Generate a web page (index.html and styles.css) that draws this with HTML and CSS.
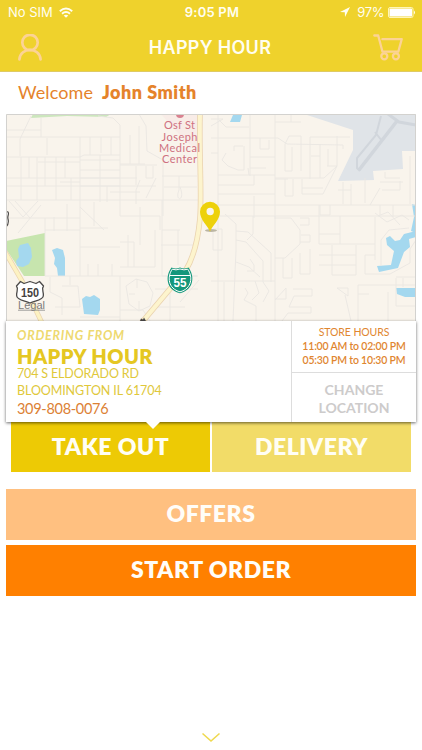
FILE: index.html
```html
<!DOCTYPE html>
<html lang="en">
<head>
  <meta charset="UTF-8" />
  <meta name="viewport" content="width=device-width, initial-scale=1.0"/>
  <title>Happy Hour</title>
  <link rel="stylesheet" href="styles.css">
</head>
<body>
  <header class="header">
    <div class="status">
      <div class="status-left">
        <span class="carrier">No SIM</span>
        <svg class="wifi" width="14" height="11" viewBox="0 0 14 11" fill="none" stroke="#fffef0" stroke-width="1.9">
          <path d="M0.8 4.2 Q7 -1.3 13.2 4.2"/>
          <path d="M3 6.8 Q7 3.3 11 6.8"/>
          <path d="M7 10.8 L4.7 8.6 Q7 6.8 9.3 8.6 Z" fill="#fffef0" stroke="none"/>
        </svg>
      </div>
      <span class="time">9:05 PM</span>
      <div class="status-right">
        <svg width="10" height="10" viewBox="0 0 10 10"><path d="M10 0 L0 5 L4.8 5.2 L5 10 Z" fill="#fffef0"/></svg>
        <span class="percent">97%</span>
        <svg width="28" height="11" viewBox="0 0 28 11">
          <rect x="0.5" y="0.5" width="24.5" height="10" rx="1.5" fill="none" stroke="#fff6b8"/>
          <rect x="1.5" y="1.5" width="22.5" height="8" rx="0.6" fill="#fff"/>
          <path d="M26 3.5 Q28 5.5 26 7.5 Z" fill="#fffef0"/>
        </svg>
      </div>
    </div>
    <div class="navbar">
      <svg class="user" width="26" height="28" viewBox="0 0 26 28" fill="none" stroke="#fcd395" stroke-width="2.7" stroke-linecap="round">
        <circle cx="13" cy="8.5" r="7.7"/>
        <path d="M2.4 25.3 C3.5 12.8 22.5 12.8 23.6 25.3"/>
      </svg>
      <h1 class="title">HAPPY HOUR</h1>
      <svg class="cart" width="30" height="27" viewBox="0 0 30 27" fill="none" stroke="#fcd395" stroke-width="2.3" stroke-linecap="round" stroke-linejoin="round">
        <path d="M1.3 1.5 H5.2 L9.5 17.7 H25.3 L28.7 5.2 H9.4"/>
        <circle cx="11.3" cy="22.3" r="3"/>
        <circle cx="22.9" cy="22.3" r="3"/>
      </svg>
    </div>
  </header>

  <div class="welcome"><span class="hello">Welcome</span><b class="name">John Smith</b></div>

  <main class="content">
    <svg class="map" width="410" height="207" viewBox="6 114 410 207">
      <rect x="6" y="114" width="410" height="207" fill="#f9f4ec"/>
      <!-- airport -->
      <path d="M304 114 H416 V151 H402 L403 169 L373 171 L374 180 L338 181 L353 150 V130 Z" fill="#e0e4e8"/>
      <g fill="none" stroke="#d1d6dc">
        <path d="M397 121 L359 170" stroke-width="3.5"/>
        <path d="M381 116 L376 135 L357 158 V168 L360 171 M375 132 L382 141" stroke-width="2"/>
        <path d="M388 114 L399 122 L416 125" stroke-width="3"/>
      </g>
      <!-- parks and water -->
      <path d="M33 114 H111 L106 117 L67 116 L31 118 Z" fill="#cce6bd"/>
      <path d="M6 241 L45 233 V276 H24 L6 249 Z" fill="#c7e5ae"/>
      <path d="M161 114 H198 V152 L178 133 Z" fill="#f8ece7"/>
      <g fill="#a4d8ef">
        <path d="M20 245 L28 243 L31 248 L32 257 L29 264 L23 267 L17 266 L16 261 L19 257 L18 249 Z"/>
        <path d="M52 250 L57 248 L63 250 L65 258 V276 H58 L57 268 L54 264 L55 258 Z"/>
        <path d="M82 299 L86 296 L90 297 L94 295 L100 299 V310 L98 315 L84 314 Z"/>
        <path d="M233 115 H242 L240 122 H230 Z"/>
        <path d="M386 238 L390 236 L395 241 L400 240 L404 234 L416 231 V237 L409 239 L410 247 L404 252 L398 268 L379 272 L377 266 L391 265 L394 251 L387 245 Z"/>
        <path d="M416 205 L412 204 L414 217 L411 231 L416 233 Z"/>
        <path d="M396 288 H416 V297 H405 L397 294 Z"/>
      </g>
      <!-- streets -->
      <g fill="none" stroke="#eae6e2" stroke-width="0.9">
        <path d="M31 116 L20 139 V156 M6 130 H41 M41 118 V137 M6 137 H120 M47 138 V155 M6 157 H80 L84 155 H120 M80 137 V276 M90 137 V155 M101 137 V153 M111 137 V155 M98 116 L113 118 L120 125 V216 M139 126 V164 M130 135 V164 M120 164 H145 M139 114 L146 126 L147 151 L163 160 V216"/>
        <path d="M6 178 H137 M6 186 H156 M6 200 H198 M21 157 V200 M29 157 V178 M37 157 V200 M45 157 V186 M56 157 V200 M65 157 V178 M71 178 V200 M38 162 H80 M60 182 H80 M80 160 H120 M80 170 H120 M80 178 H120 M80 186 H120 M100 155 V202 M107 186 V202 M110 192 H140 M120 165 H157 M136 166 V185 M146 166 V178 L153 178 V166 M156 178 L146 198 M140 180 L136 190 V204 M162 176 H197 M164 187 H197 M179 176 V190 M179 190 C174 202 186 202 180 187"/>
        <path d="M9 201 L23 217 L38 201 M15 201 L30 218 M6 218 H80 M18 233 L41 205 M45 218 V276 M45 230 H80 M54 217 V231 M67 204 V231 M80 247 H120 M80 228 H108 M80 207 L104 230 M94 202 V226 M120 216 H160 V230 M120 242 H134 V267 M128 235 V267 M120 267 H155 V230 M140 207 V245 M162 200 V276 L198 276 M162 230 H180 M178 230 V265 M161 245 H195 M45 276 H197 M88 264 V276 M98 264 V276 M112 264 V276"/>
        <path d="M50 277 V292 L62 298 V315 M62 286 H78 L80 307 H55 M70 276 V285 M120 276 V321 M120 310 H143 L150 321 M126 286 L136 279 L147 282 L153 293 L150 306 L139 311 L129 304 Z M137 279 V288 M129 294 H135 M139 310 V301 M80 317 H120 M155 289 H198 M155 307 H185 M170 276 V321 M199 280 L180 302"/>
        <path d="M211 119 H223 L211 126 M219 120 L226 127 H249 M250 114 V176 M211 138 H278 L287 144 L343 145 V149 M260 138 V149 H269 V140 M275 114 V219 M275 122 H301 M291 114 V122 M218 114 V321 M211 153 H218 M243 146 H234 V151 M226 153 L222 160 L228 166 L238 170 H244 V146 M250 157 H275 M250 168 H266 M218 175 H275 M249 175 L248 168"/>
        <path d="M285 171 V144 L289 136 H301 V171 M285 171 H292 V147 M310 179 V137 H350 M320 144 V178 M328 149 V166 M337 136 V166 L324 178 H275 M311 156 H320 M327 166 H337 L323 194 H302 V179 M288 179 H275 M285 179 V196 H293 V179 M302 188 H323 M218 185 H254 V175 M218 194 H275 M254 196 V218 M211 205 H416 M343 182 V204 M351 184 V205 M365 178 V203 M380 188 L370 205 M338 190 H351 M380 182 H403 M385 172 V178 H400 M400 181 V190 H382 M380 205 V215 M393 205 V217 M410 156 V204 M330 205 V215 H320 V205"/>
        <path d="M225 214 L236 224 V250 L233 321 M213 229 H222 V250 H213 Z M236 231 L248 232 L271 253 V282 M236 240 L246 242 L263 261 V282 M253 216 V234 L247 240 M236 262 L249 267 L260 277 M250 259 L254 265 V271 H247 M211 281 H275 M275 216 V321 M275 258 H285 L300 244 V230 L291 218 H275 M300 218 H309 V225 H300 M301 235 H310 V242 H300 M310 249 V274 H300 V253 M283 258 V278 H292 V258 M319 205 V244 H375 M319 234 H340 M340 216 V244 M332 245 V275 H356 V245 M319 255 H356 M319 265 H356 M375 217 V260 M375 255 H365 V274 H390 L410 263 V249 L416 240"/>
        <path d="M358 321 V285 H416 M358 294 H369 M337 288 L348 296 V288 H337 M345 295 L351 321 M275 300 L286 288 V299 H275 M293 289 H312 V296 H294 L289 307 H311 V313 H288 L282 321 M245 288 L248 293 L244 300 L256 306 V321 M255 281 L259 293 L252 300 M263 282 L269 291 L263 302 M224 282 V321 M388 292 V321 M396 278 V306 H416 M396 277 H416 M403 278 V287 M375 213 L387 222 L402 215 L409 220 M378 216 L388 212 L400 225 M211 216 H416 M381 266 V240 L389 230 L409 228"/>
      </g>
      <!-- interstate and route 150 -->
      <g fill="none">
        <path d="M200 114 C199 160 202 190 200 218 C197 252 187 273 175 283 L138 327" stroke="#ead3b0" stroke-width="5.6"/>
        <path d="M200 114 C199 160 202 190 200 218 C197 252 187 273 175 283 L138 327" stroke="#fdf4cd" stroke-width="4"/>
        <path d="M4 250 L22 281 L43 325" stroke="#ead3b0" stroke-width="5"/>
        <path d="M4 250 L22 281 L43 325" stroke="#fdf2c2" stroke-width="3.5"/>
      </g>
      <path d="M176 114 A3.2 3.2 0 0 0 184 114" fill="#d98290"/>
      <g class="place">
        <text x="179.5" y="129" textLength="31">Osf St</text>
        <text x="179.5" y="140.5" textLength="36">Joseph</text>
        <text x="179.5" y="152" textLength="41">Medical</text>
        <text x="179.5" y="163.3" textLength="35">Center</text>
      </g>
      <!-- US 150 shield -->
      <path d="M20.5 281.5 L24 283.5 L30 281.5 L36 283.5 L39.5 281.5 L43.5 286 C41 289 44 292 43.3 296 C43 300 36 300.5 30 303 C24 300.5 17 300 16.7 296 C16 292 19 289 16.5 286 Z" fill="#fff" stroke="#4b4948" stroke-width="1.3" stroke-linejoin="round"/>
      <text class="route" x="30" y="296.8" textLength="18" lengthAdjust="spacingAndGlyphs">150</text>
      <text class="legal" x="18" y="309" textLength="27">Legal</text>
      <path d="M18 310.2 H45" stroke="#858585" stroke-width="0.8"/>
      <path d="M6 211.5 L8 212 C9.5 214 7 216 8 219 C9 223 8 225 6 227" fill="#fff" stroke="#4b4948" stroke-width="1.2"/>
      <!-- I-55 shield -->
      <path d="M171.5 267.5 Q176 269.3 180 267.5 Q184 269.3 188.5 267.5 C195 276 194 290 180 293.2 C166 290 165 276 171.5 267.5 Z" fill="#14977b"/>
      <path d="M172.2 269.2 Q176 270.6 180 269 Q184 270.6 187.8 269.2 C193 277 192 288.6 180 291.8 C168 288.6 167 277 172.2 269.2 Z" fill="none" stroke="#fff" stroke-width="1"/>
      <path d="M169.4 275.5 H190.6" stroke="#fff" stroke-width="1"/>
      <text class="interstate" x="180" y="286.6" textLength="13" lengthAdjust="spacingAndGlyphs">55</text>
      <path d="M140 321 L141 318.5 L143 319.5 L144 317.5 L146 321 Z" fill="#4b4948"/>
      <!-- store pin -->
      <ellipse cx="211" cy="230.5" rx="6" ry="1.5" fill="#bbb5a3"/>
      <path fill-rule="evenodd" d="M210 231.5 C208 226 200 220 200 211.7 A10 10 0 0 1 220 211.7 C220 220 212 226 210 231.5 Z M206.5 211.5 A3.7 3.7 0 1 0 213.9 211.5 A3.7 3.7 0 1 0 206.5 211.5 Z" fill="#edd10b"/>
      <path d="M6.5 321 V114.5 H415.5 V321" fill="none" stroke="#d3d2cf"/>
    </svg>

    <section class="store">
      <div class="store-info">
        <div class="from">ORDERING FROM</div>
        <div class="store-name">HAPPY HOUR</div>
        <div class="street">704 S ELDORADO RD</div>
        <div class="city">BLOOMINGTON IL 61704</div>
        <div class="phone">309-808-0076</div>
      </div>
      <div class="store-side">
        <div class="hours">
          <div class="hours-label">STORE HOURS</div>
          <div class="hours-row">11:00 AM to 02:00 PM</div>
          <div class="hours-row">05:30 PM to 10:30 PM</div>
        </div>
        <div class="change">
          <span class="change-top">CHANGE</span>
          <span class="change-bottom">LOCATION</span>
        </div>
      </div>
    </section>

    <div class="tabs">
      <div class="tab active">TAKE OUT</div>
      <div class="tab">DELIVERY</div>
    </div>

    <div class="btn offers">OFFERS</div>
    <div class="btn start">START ORDER</div>
  </main>

  <svg class="more" width="20" height="11" viewBox="0 0 20 11"><path d="M1.5 1.5 L10 9 L18.5 1.5" fill="none" stroke="#efd94f" stroke-width="1.6"/></svg>
</body>
</html>
```
FILE: styles.css
```css
* { box-sizing: border-box; }
body { font-family: Lato, "Liberation Sans", sans-serif; margin: 0; height: 750px; background: #fff; display: flex; flex-direction: column; overflow: hidden; }
svg { display: block; flex: none; }

.header { height: 72px; background: #efd22c; border-bottom: 1px solid #dfcb65; color: #fffef0; font-family: Inter, "Liberation Sans", sans-serif; }
.status { height: 24px; padding: 0 6px 0 8px; display: grid; grid-template-columns: 1fr auto 1fr; align-items: center; font-size: 13px; line-height: 24px; }
.status-left { display: flex; align-items: center; gap: 6px; }
.carrier { letter-spacing: 0; }
.time { font-weight: 600; letter-spacing: 0.2px; }
.status-right { display: flex; align-items: center; justify-content: flex-end; gap: 4px; }
.percent { margin-left: 3px; letter-spacing: -0.4px; }
.navbar { height: 47px; padding: 0 19px 0 17px; display: grid; grid-template-columns: 1fr auto 1fr; align-items: center; }
.title { margin: 0; font-size: 18px; font-weight: 600; letter-spacing: 0.3px; line-height: 47px; }
.cart { justify-self: end; }

.welcome { height: 42px; padding-left: 18px; display: flex; gap: 9px; font-size: 18px; line-height: 41px; color: #e5832b; }
.hello { letter-spacing: 0.1px; }
.name { font-weight: 800; letter-spacing: 0.5px; }

.content { padding: 0 6px; }
.place { font-size: 11px; fill: #cf7180; text-anchor: middle; }
.legal { font-size: 11px; fill: #7d7b79; font-family: "Liberation Sans", sans-serif; }
.route { font: bold 12px "Liberation Sans", sans-serif; fill: #45413f; text-anchor: middle; }
.interstate { font: bold 12px "Liberation Sans", sans-serif; fill: #fff; text-anchor: middle; }

.store { position: relative; height: 101px; display: flex; background: #fff; box-shadow: 0 1px 3px #0009; }
.store::after { content: ""; position: absolute; left: 139px; top: 100px; border: 8px solid transparent; border-top-color: #fff; border-bottom: 0; }
.store-info { flex: 1; padding: 7px 0 0 11px; color: #e0c83a; }
.from { font-size: 12.5px; line-height: 16px; font-weight: bold; font-style: italic; letter-spacing: 0.75px; color: #eed970; }
.store-name { font-size: 20px; line-height: 24px; font-weight: 800; letter-spacing: 0.4px; color: #e5c722; }
.street { font-size: 12.5px; line-height: 12px; letter-spacing: -0.15px; }
.city { font-size: 12.5px; line-height: 22px; letter-spacing: -0.1px; }
.phone { font-size: 14.5px; line-height: 13px; letter-spacing: -0.3px; color: #dc8135; }
.store-side { width: 125px; border-left: 1px solid #ddd; text-align: center; }
.hours { height: 52px; padding-top: 4px; border-bottom: 1px solid #ddd; color: #df8630; font-size: 10.5px; line-height: 14px; }
.hours-label { letter-spacing: -0.1px; }
.hours-row { font-weight: 600; letter-spacing: -0.2px; }
.change { display: flex; flex-direction: column; padding-top: 8px; font-size: 14px; line-height: 18px; font-weight: bold; color: #cdcbcb; }
.change-top, .change-bottom { letter-spacing: 0; }

.tabs { display: flex; gap: 2px; padding: 0 5px; margin-bottom: 17px; }
.tab { flex: 1; height: 50px; line-height: 48px; background: #f2dc68; color: #fffef5; text-align: center; font-size: 23px; font-weight: 800; letter-spacing: 0.5px; }
.tab.active { background: #edca05; }
.btn { height: 51px; line-height: 49px; margin-bottom: 5px; color: #fffdf8; text-align: center; font-size: 23px; font-weight: 800; letter-spacing: 0.5px; }
.offers { background: #ffc080; }
.start { background: #ff8000; }
.more { margin: auto auto 7px; }
```
